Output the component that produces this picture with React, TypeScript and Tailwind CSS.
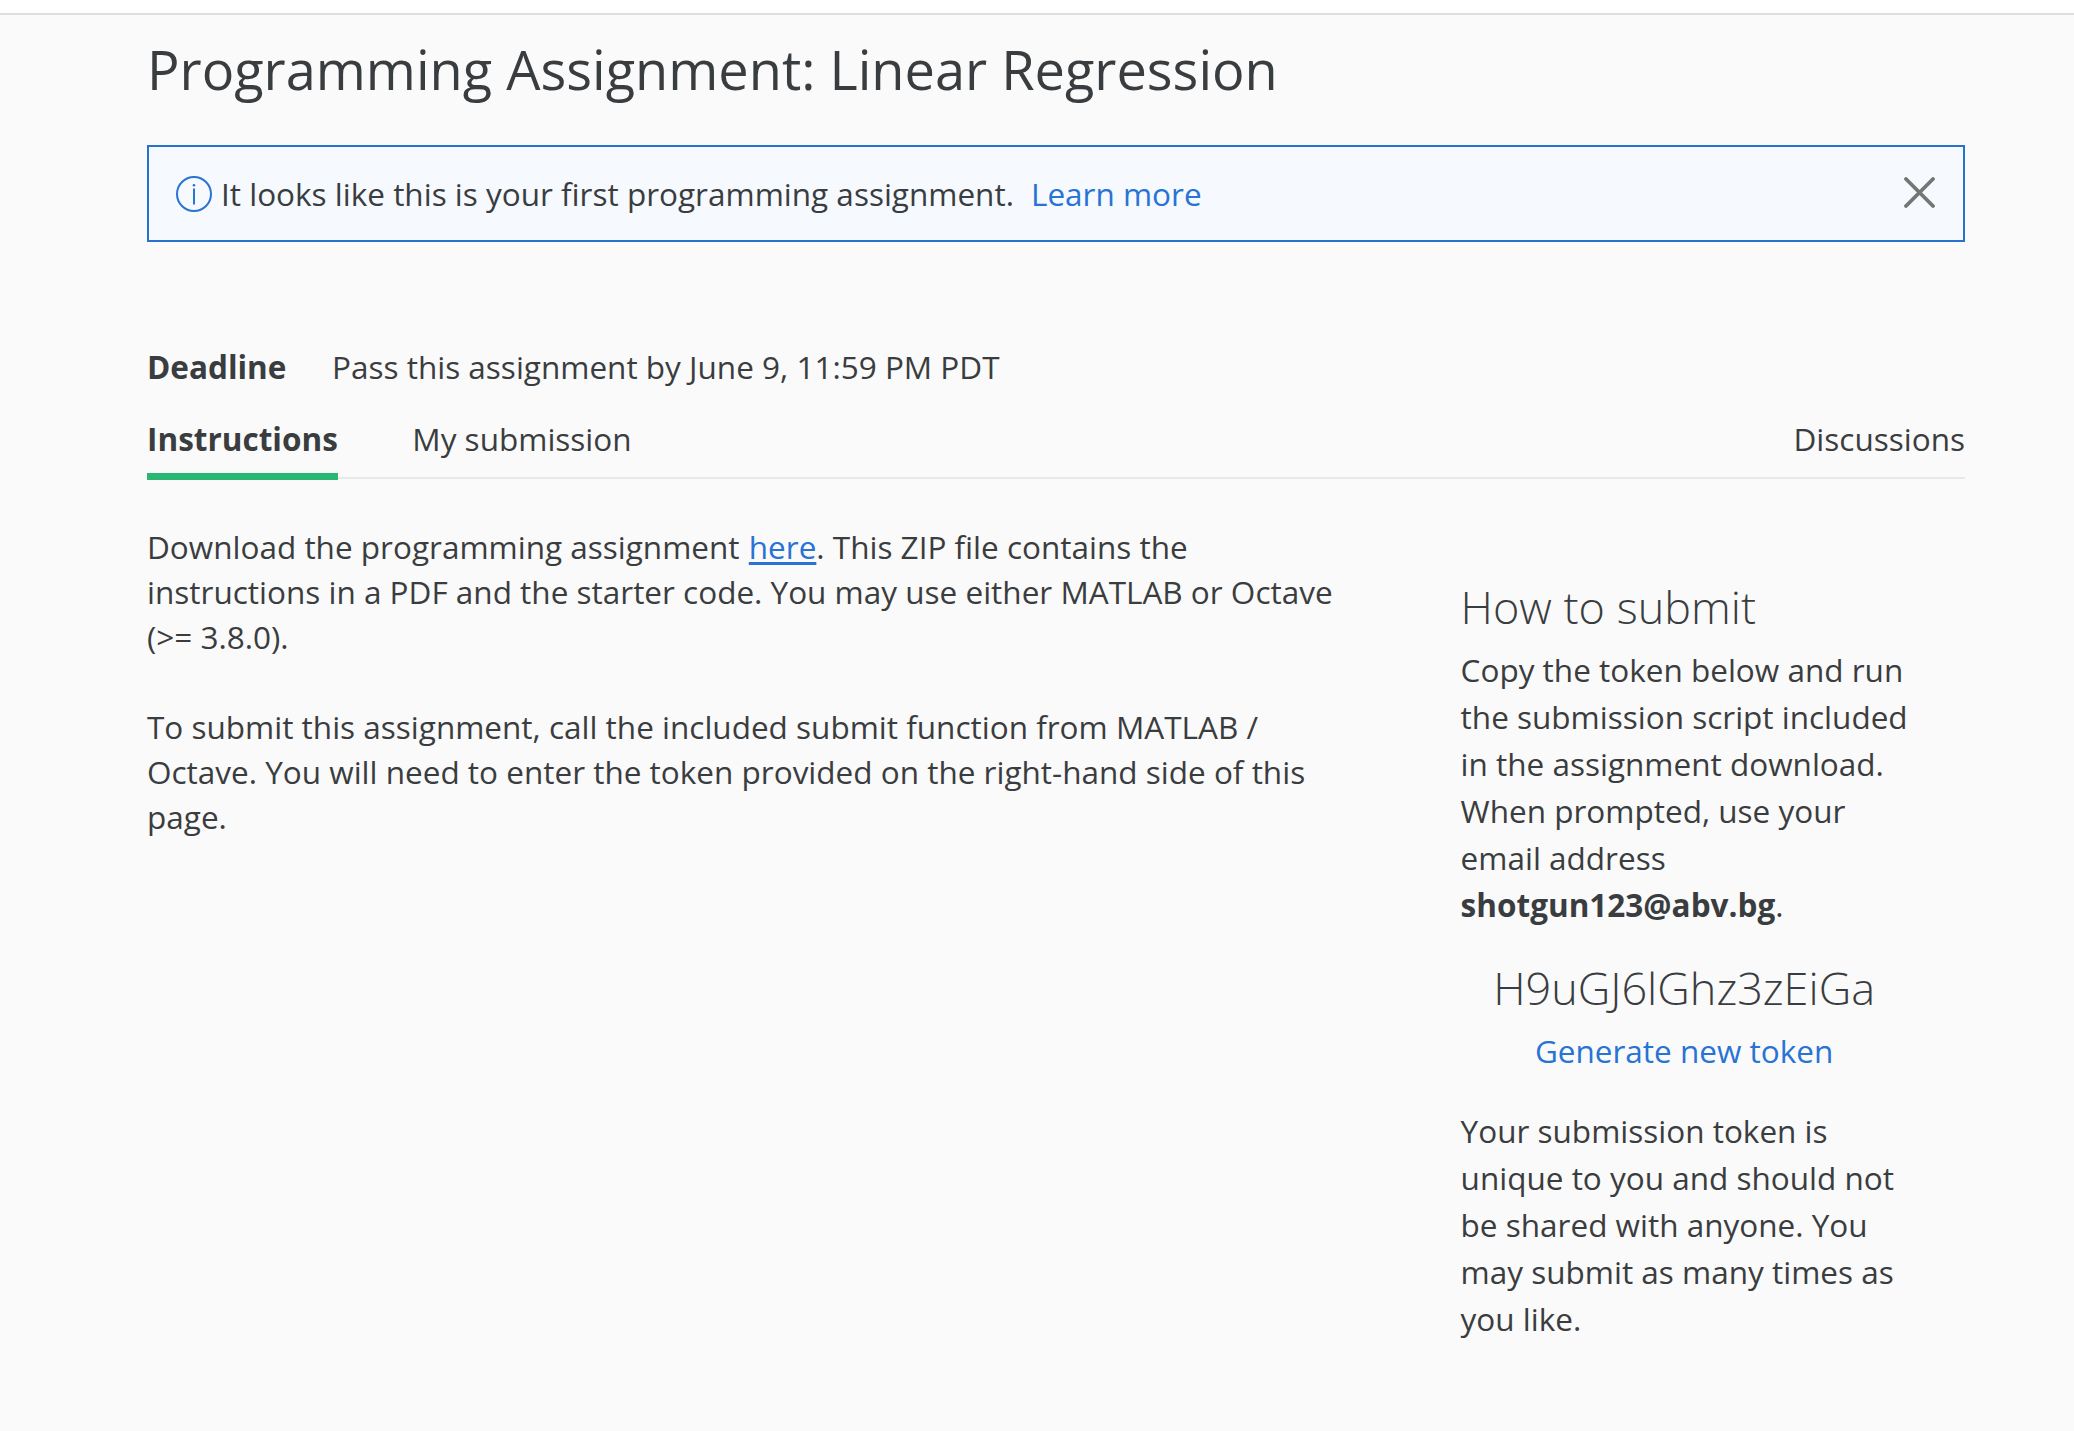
export default function App() {
  return (
    <div className="min-h-[1431px] w-full bg-[#fafafa] font-['Open_Sans',sans-serif] text-[31.5px] leading-[45px] text-[#3a3d3f]">
      <header className="h-[15px] border-b-2 border-[#dedede] bg-white" />
      <main className="ml-[147px] w-[1818px]">
        <h1 className="pt-6 text-[54.12px] leading-[60px] whitespace-nowrap">
          Programming Assignment: Linear Regression
        </h1>

        <div className="mt-[46px] flex h-[97px] items-center justify-between border-2 border-[#2872cf] bg-[#f6faff] pr-[28px] pl-[27px]">
          <div className="flex items-center">
            <svg className="mt-px mr-[9px] size-9 text-[#2873d4]" viewBox="0 0 36 36" fill="none" stroke="currentColor" strokeWidth="2">
              <circle cx="18" cy="18" r="17" />
              <path d="M18 12.5v16" />
              <circle cx="18" cy="9.3" r="1.3" fill="currentColor" stroke="none" />
            </svg>
            <span>It looks like this is your first programming assignment.</span>
            <a className="ml-[17px] text-[#2873d4]">Learn more</a>
          </div>
          <svg className="mb-[2px] size-[31px] text-[#757575]" viewBox="0 0 31 31" fill="none" stroke="currentColor" strokeWidth="3.8" strokeLinecap="round">
            <path d="M2 2l27 27M29 2l-27 27" />
          </svg>
        </div>

        <div className="mt-[102px] flex">
          <span className="w-[185px] font-bold">Deadline</span>
          <span>Pass this assignment by June 9, 11:59 PM PDT</span>
        </div>

        <nav className="mt-[27px] flex h-[63px] items-start border-b-2 border-[#e9e9e9]">
          <a className="h-16 border-b-[7px] border-[#2ab673] font-bold">Instructions</a>
          <a className="ml-[74.5px]">My submission</a>
          <a className="ml-auto">Discussions</a>
        </nav>

        <div className="flex">
          <section className="mt-[45px] w-[1200px] whitespace-nowrap">
            <p>
              Download the programming assignment{" "}
              <a className="ml-px text-[#2873d4] underline decoration-[3px] underline-offset-[3px]">here</a>. This ZIP file contains the
              <br />
              instructions in a PDF and the starter code. You may use either MATLAB or Octave
              <br />
              (&gt;= 3.8.0).
            </p>
            <p className="mt-[45px]">
              To submit this assignment, call the included submit function from MATLAB /
              <br />
              Octave. You will need to enter the token provided on the right-hand side of this
              <br />
              page.
            </p>
          </section>
          <aside className="mt-[98px] ml-[113.6px] w-[447px] leading-[47px] whitespace-nowrap">
            <h2 className="text-[45px] leading-[60px] font-light">How to submit</h2>
            <p className="mt-[9px]">
              Copy the token below and run
              <br />
              the submission script included
              <br />
              in the assignment download.
              <br />
              When prompted, use your
              <br />
              email address
              <br />
              <b>shotgun123@abv.bg</b>.
            </p>
            <div className="mt-[30px] flex flex-col items-center">
              <div className="text-[45px] leading-[60px] font-light">H9uGJ6lGhz3zEiGa</div>
              <a className="mt-[9px] text-[#2873d4]">Generate new token</a>
            </div>
            <p className="mt-[33px]">
              Your submission token is
              <br />
              unique to you and should not
              <br />
              be shared with anyone. You
              <br />
              may submit as many times as
              <br />
              you like.
            </p>
          </aside>
        </div>
      </main>
    </div>
  );
}
